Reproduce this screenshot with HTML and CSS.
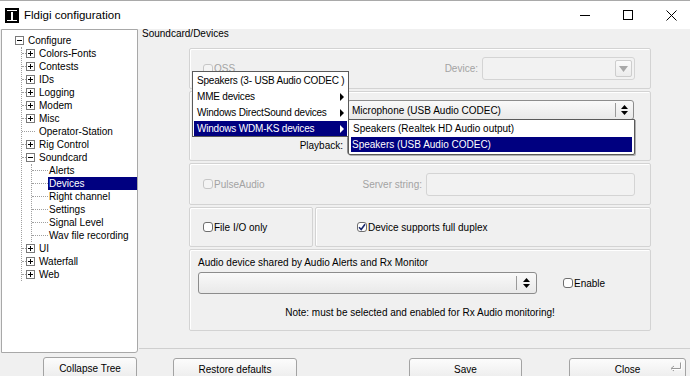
FILE: index.html
```html
<!DOCTYPE html>
<html lang="en">
<head>
<meta charset="utf-8">
<title>Fldigi configuration</title>
<link rel="stylesheet" href="styles.css">
</head>
<body>
<header class="titlebar">
    <svg class="appicon" width="14" height="15" viewBox="0 0 14 15">
        <rect width="14" height="15" fill="#000"/>
        <rect x="2" y="2" width="10" height="1" fill="#fff"/>
        <rect x="6" y="4" width="2" height="9" fill="#fff"/>
        <rect x="2" y="12" width="10" height="1" fill="#fff"/>
    </svg>
    <span class="title">Fldigi configuration</span>
    <div class="controls">
        <svg width="10" height="10" viewBox="0 0 10 10"><path d="M0 5.5H10" stroke="#000" stroke-width="1"/></svg>
        <svg width="10" height="10" viewBox="0 0 10 10"><rect x="0.5" y="0.5" width="9" height="9" fill="none" stroke="#000"/></svg>
        <svg width="11" height="11" viewBox="0 0 11 11"><path d="M0.5 0.5L10.5 10.5M10.5 0.5L0.5 10.5" stroke="#000" stroke-width="1"/></svg>
    </div>
</header>

<div class="dialog">
    <div class="side">
        <div class="tree">
            <div class="row"><span class="box minus"></span><span class="lbl">Configure</span></div>
            <div class="kids">
                <div class="row"><span class="stub"></span><span class="box plus"></span><span class="lbl">Colors-Fonts</span></div>
                <div class="row"><span class="stub"></span><span class="box plus"></span><span class="lbl">Contests</span></div>
                <div class="row"><span class="stub"></span><span class="box plus"></span><span class="lbl">IDs</span></div>
                <div class="row"><span class="stub"></span><span class="box plus"></span><span class="lbl">Logging</span></div>
                <div class="row"><span class="stub"></span><span class="box plus"></span><span class="lbl">Modem</span></div>
                <div class="row"><span class="stub"></span><span class="box plus"></span><span class="lbl">Misc</span></div>
                <div class="row"><span class="stub leaf"></span><span class="lbl">Operator-Station</span></div>
                <div class="row"><span class="stub"></span><span class="box plus"></span><span class="lbl">Rig Control</span></div>
                <div class="row"><span class="stub"></span><span class="box minus"></span><span class="lbl">Soundcard</span></div>
                <div class="kids sub">
                    <div class="row"><span class="stub"></span><span class="lbl">Alerts</span></div>
                    <div class="row"><span class="stub"></span><span class="lbl sel">Devices</span></div>
                    <div class="row"><span class="stub"></span><span class="lbl">Right channel</span></div>
                    <div class="row"><span class="stub"></span><span class="lbl">Settings</span></div>
                    <div class="row"><span class="stub"></span><span class="lbl">Signal Level</span></div>
                    <div class="row"><span class="stub"></span><span class="lbl">Wav file recording</span></div>
                </div>
                <div class="row"><span class="stub"></span><span class="box plus"></span><span class="lbl">UI</span></div>
                <div class="row"><span class="stub"></span><span class="box plus"></span><span class="lbl">Waterfall</span></div>
                <div class="row"><span class="stub"></span><span class="box plus"></span><span class="lbl">Web</span></div>
            </div>
        </div>
        <button class="btn collapse">Collapse Tree</button>
    </div>

    <div class="main">
        <div class="panel">
            <div class="caption">Soundcard/Devices</div>
            <div class="groups">
                <div class="grp g-oss">
                    <label class="check off"><span class="cb"></span>OSS</label>
                    <span class="fld-label off">Device:</span>
                    <div class="combo dis device">
                        <span class="dropbtn">
                            <svg width="9" height="6" viewBox="0 0 9 6"><path d="M0 0H9L4.5 6Z" fill="#a8a8a8"/></svg>
                        </span>
                    </div>
                </div>

                <div class="grp g-port">
                    <div class="port-row">
                        <div class="combo capture">
                            <span class="val">Microphone (USB Audio CODEC)</span>
                            <span class="arrows"><svg width="7" height="10" viewBox="0 0 7 10"><path d="M0 4L3.5 0L7 4ZM0 6L3.5 10L7 6Z" fill="#000"/></svg></span>
                        </div>
                    </div>
                    <div class="port-row">
                        <span class="fld-label">Playback:</span>
                        <div class="combo capture">
                            <span class="val"></span>
                        </div>
                    </div>
                    <div class="droplist">
                        <div class="opt">Speakers (Realtek HD Audio output)</div>
                        <div class="opt hi">Speakers (USB Audio CODEC)</div>
                    </div>
                </div>

                <div class="grp g-pulse">
                    <label class="check off"><span class="cb"></span>PulseAudio</label>
                    <span class="fld-label off">Server string:</span>
                    <div class="input dis"></div>
                </div>

                <div class="g-split">
                    <div class="grp g-fileio">
                        <label class="check"><span class="cb"></span>File I/O only</label>
                    </div>
                    <div class="grp g-duplex">
                        <label class="check"><span class="cb on"><svg width="8" height="8" viewBox="0 0 8 8"><path d="M1 4.2L3.2 6.5L7 1.2" fill="none" stroke="#1a2a6e" stroke-width="1.6"/></svg></span>Device supports full duplex</label>
                    </div>
                </div>

                <div class="grp g-shared">
                    <div class="shared-label">Audio device shared by Audio Alerts and Rx Monitor</div>
                    <div class="shared-row">
                        <div class="combo shared">
                            <span class="val"></span>
                            <span class="arrows"><svg width="7" height="10" viewBox="0 0 7 10"><path d="M0 4L3.5 0L7 4ZM0 6L3.5 10L7 6Z" fill="#000"/></svg></span>
                        </div>
                        <label class="check enable"><span class="cb"></span>Enable</label>
                    </div>
                    <div class="note">Note: must be selected and enabled for Rx Audio monitoring!</div>
                </div>

                <div class="menu">
                    <div class="item">Speakers (3- USB Audio CODEC )</div>
                    <div class="item sub">MME devices</div>
                    <div class="item sub">Windows DirectSound devices</div>
                    <div class="item sub hi">Windows WDM-KS devices</div>
                </div>
            </div>
        </div>

        <div class="actions">
            <button class="btn restore">Restore defaults</button>
            <button class="btn save">Save</button>
            <button class="btn close">Close
                <svg class="enter" width="13" height="10" viewBox="0 0 13 10">
                    <path d="M11.5 0.5V6.5H2.5M5 4L2 6.5L5 9" fill="none" stroke="#9a9a9a" stroke-width="1"/>
                    <path d="M12.5 1V7.5H3" fill="none" stroke="#fff" stroke-width="1"/>
                </svg>
            </button>
        </div>
    </div>
</div>
</body>
</html>
```

FILE: styles.css
```css
* {
    box-sizing: border-box;
}

body {
    margin: 0;
    width: 690px;
    height: 376px;
    overflow: hidden;
    background: #f0f0f0;
    font-family: "Liberation Sans", Arial, sans-serif;
    font-size: 10px;
    color: #000;
}

/* title bar */

.titlebar {
    height: 29px;
    background: #fff;
    border-top: 1px solid #a9a9a9;
    display: flex;
    align-items: center;
}

.appicon {
    margin-left: 5px;
}

.title {
    margin-left: 5px;
    font-size: 11.5px;
}

.controls {
    margin-left: auto;
    margin-right: 13px;
    display: flex;
    align-items: center;
    gap: 33px;
}

/* layout */

.dialog {
    display: grid;
    grid-template-columns: 138px 1fr;
    column-gap: 1px;
}

.side {
    display: flex;
    flex-direction: column;
}

/* tree */

.tree {
    margin-left: 1px;
    height: 324px;
    background: #fff;
    border: 1px solid #a8a8a8;
    border-radius: 0 0 3px 0;
    padding: 4px 0 0 13px;
}

.row {
    display: flex;
    align-items: center;
    height: 13px;
    white-space: nowrap;
}

.lbl {
    line-height: 13px;
    margin-left: 4px;
}

.box {
    width: 9px;
    height: 9px;
    border: 1px solid #7a7a7a;
    background: #fff;
    position: relative;
    flex: none;
}

.box::before {
    content: "";
    position: absolute;
    left: 1px;
    top: 3px;
    width: 5px;
    height: 1px;
    background: #000;
}

.box.plus::after {
    content: "";
    position: absolute;
    left: 3px;
    top: 1px;
    width: 1px;
    height: 5px;
    background: #000;
}

.kids {
    margin-left: 6px;
    border-left: 1px dotted #a0a0a0;
}

.stub {
    width: 4px;
    border-top: 1px dotted #a0a0a0;
    flex: none;
}

.stub.leaf {
    width: 13px;
}

.kids.sub {
    margin-left: 9px;
}

.kids.sub .stub {
    width: 16px;
}

.kids.sub .lbl {
    margin-left: 0;
    padding-left: 1px;
}

.lbl.sel {
    flex: 1;
    background: #000080;
    color: #fff;
}

/* buttons */

.btn {
    font-family: inherit;
    font-size: 10px;
    color: #000;
    height: 22px;
    border: 1px solid #a3a3a3;
    border-radius: 3px;
    background: linear-gradient(#fcfcfc, #ececec);
    padding: 0;
    position: relative;
}

.collapse {
    margin: 4px 0 0 43px;
    width: 94px;
}

.actions {
    display: flex;
    margin-top: 9px;
    padding-left: 34px;
}

.restore {
    width: 124px;
}

.save {
    width: 113px;
    margin-left: 112px;
}

.close {
    width: 117px;
    margin-left: 47px;
}

.enter {
    position: absolute;
    right: 3px;
    top: 3px;
}

/* main panel */

.panel {
    height: 320px;
    border-bottom: 1px solid #cfcfcf;
}

.caption {
    padding-left: 3px;
    line-height: 10px;
}

.groups {
    position: relative;
    margin: 9px 0 0 50px;
    width: 462px;
    display: flex;
    flex-direction: column;
    gap: 2px;
}

.grp {
    border: 1px solid #d3d3d3;
    border-radius: 2px;
    box-shadow: inset 1px 1px 0 #fff;
}

.g-oss {
    height: 41px;
    display: flex;
    align-items: center;
    padding: 0 15px 0 13px;
}

.g-port {
    position: relative;
    height: 70px;
    padding: 8px 16px 0 0;
    display: flex;
    flex-direction: column;
    gap: 15px;
}

.port-row {
    display: flex;
    justify-content: flex-end;
    align-items: center;
}

.g-pulse {
    height: 42px;
    display: flex;
    align-items: center;
    padding: 0 15px 0 13px;
}

.g-split {
    display: flex;
    gap: 2px;
}

.g-fileio {
    width: 124px;
    height: 40px;
    display: flex;
    align-items: center;
    padding-left: 13px;
}

.g-duplex {
    flex: 1;
    height: 40px;
    display: flex;
    align-items: center;
    padding-left: 41px;
}

.g-shared {
    height: 82px;
    padding: 7px 0 0 8px;
}

.shared-label {
    line-height: 12px;
}

.shared-row {
    display: flex;
    align-items: center;
    margin-top: 3px;
}

.enable {
    margin-left: 26px;
}

.note {
    text-align: center;
    line-height: 12px;
    margin: 13px 8px 0 0;
}

/* fields */

.fld-label {
    margin-left: auto;
    margin-right: 4px;
}

.off {
    color: #a3a3a3;
}

.check {
    display: flex;
    align-items: center;
    gap: 1px;
    white-space: nowrap;
}

.cb {
    width: 10px;
    height: 10px;
    border: 1px solid #6e6e6e;
    border-radius: 3px;
    background: #fff;
    display: flex;
    align-items: center;
    justify-content: center;
}

.check.off .cb {
    border-color: #c6c6c6;
    background: #f4f4f4;
}

.combo {
    display: flex;
    align-items: center;
    border: 1px solid #8c8c8c;
    border-radius: 3px;
    background: linear-gradient(#f9f9f9, #e9e9e9);
}

.combo .val {
    flex: 1;
    padding-left: 4px;
    white-space: nowrap;
}

.combo .arrows {
    width: 18px;
    height: 14px;
    border-left: 1px solid #9a9a9a;
    display: flex;
    align-items: center;
    justify-content: center;
}

.capture {
    width: 287px;
    height: 20px;
}

.shared {
    width: 339px;
    height: 22px;
}

.shared .arrows {
    width: 20px;
}

.combo.dis {
    border-color: #d4d4d4;
    background: #f2f2f2;
    justify-content: flex-end;
}

.device {
    width: 153px;
    height: 23px;
}

.dropbtn {
    width: 17px;
    height: 17px;
    margin-right: 2px;
    border: 1px solid #cdcdcd;
    border-radius: 2px;
    background: linear-gradient(#fafafa, #ececec);
    display: flex;
    align-items: center;
    justify-content: center;
}

.input {
    width: 209px;
    height: 23px;
    border: 1px solid #d4d4d4;
    border-radius: 3px;
    background: #f2f2f2;
}

/* open menus */

.droplist {
    position: absolute;
    z-index: 2;
    left: 158px;
    top: 27px;
    width: 287px;
    height: 36px;
    background: #fff;
    border: 1px solid #5a5a5a;
    border-radius: 0 0 2px 2px;
    padding: 1px 2px;
    box-shadow: 1px 1px 0 #b0b0b0;
}

.opt {
    line-height: 16px;
    padding-left: 2px;
    white-space: nowrap;
}

.opt.hi {
    background: #000080;
    color: #fff;
    line-height: 15px;
    padding-left: 1px;
}

.menu {
    position: absolute;
    z-index: 3;
    left: 3px;
    top: 23px;
    width: 157px;
    height: 66px;
    background: #fff;
    border: 1px solid #5a5a5a;
    padding: 1px 0;
}

.item {
    line-height: 16px;
    padding-left: 4px;
    white-space: nowrap;
    letter-spacing: -0.2px;
    position: relative;
}

.item.sub::after {
    content: "";
    position: absolute;
    right: 4px;
    top: 4px;
    border-left: 4px solid #000;
    border-top: 4px solid transparent;
    border-bottom: 4px solid transparent;
}

.item.hi {
    background: #000080;
    color: #fff;
    line-height: 15px;
    margin: 0 1px;
    padding-left: 3px;
}

.item.hi::after {
    border-left-color: #fff;
    right: 3px;
}
```
